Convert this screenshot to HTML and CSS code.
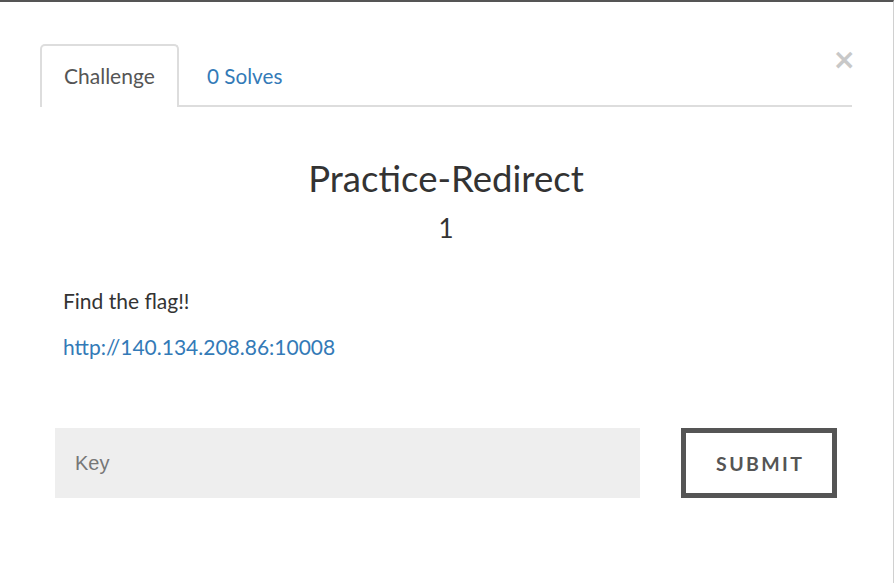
FILE: index.html
```html
<!DOCTYPE html>
<html>
<head>
<meta charset="utf-8">
<link rel="stylesheet" href="styles.css">
</head>
<body>
<div class="modal">
  <div class="content">
    <div class="tabs">
      <div class="tab active">Challenge</div>
      <div class="tab link">0 Solves</div>
      <div class="close">&times;</div>
    </div>
    <h2 class="title">Practice-Redirect</h2>
    <div class="points">1</div>
    <div class="desc">
      <p class="line">Find the flag!!</p>
      <p class="line"><a class="url" href="#">http://140.134.208.86:10008</a></p>
    </div>
    <div class="form">
      <div class="key">Key</div>
      <div class="submit">SUBMIT</div>
    </div>
  </div>
</div>
</body>
</html>
```
FILE: styles.css
```css
html, body { margin: 0; padding: 0; background: #fff; }
body { font-family: Lato, "Open Sans", sans-serif; color: #333; }
.modal {
  width: 893px;
  height: 581px;
  border-top: 2px solid #555;
  border-right: 1px solid #d0d0d0;
}
.content { padding: 42px 41px 0 40px; }
.tabs {
  display: flex;
  border-bottom: 2px solid #ddd;
  height: 61px;
}
.tab {
  box-sizing: border-box;
  height: 63px;
  padding: 0 22px 2px 22px;
  display: flex;
  align-items: center;
  font-size: 21px;
  border: 2px solid transparent;
  border-bottom: none;
  border-radius: 5px 5px 0 0;
}
.tab.active {
  border-color: #ddd;
  background: #fff;
  color: #555;
  width: 139px;
}
.tab.link { color: #337ab7; padding-left: 26px; font-size: 20.7px; }
.close {
  margin-left: auto;
  margin-right: -4px;
  margin-top: 2px;
  font-family: "DejaVu Sans", sans-serif;
  font-size: 28px;
  line-height: 28px;
  color: #c8c8c8;
  font-weight: bold;
}
.title {
  margin: 49px 0 0 0;
  text-align: center;
  font-weight: 400;
  font-size: 36.6px;
  line-height: 44px;
  color: #333;
}
.points {
  text-align: center;
  font-size: 26px;
  line-height: 30px;
  margin-top: 13px;
}
.desc { padding: 46px 0 0 23px; }
.line { margin: 0 0 22px 0; font-size: 21px; line-height: 24px; }
.url { color: #337ab7; text-decoration: none; }
.form {
  display: flex;
  padding: 47px 15px 0 15px;
  gap: 41px;
}
.key {
  box-sizing: border-box;
  width: 587px;
  height: 70px;
  background: #eee;
  padding-left: 20px;
  display: flex;
  align-items: center;
  font-family: "Liberation Sans", Arial, sans-serif;
  font-size: 20px;
  color: #777;
}
.submit {
  box-sizing: border-box;
  width: 156px;
  height: 70px;
  border: 5px solid #555;
  display: flex;
  align-items: center;
  justify-content: center;
  font-weight: bold;
  font-size: 19.5px;
  letter-spacing: 2.4px;
  padding-left: 2px;
  color: #555;
}
```
